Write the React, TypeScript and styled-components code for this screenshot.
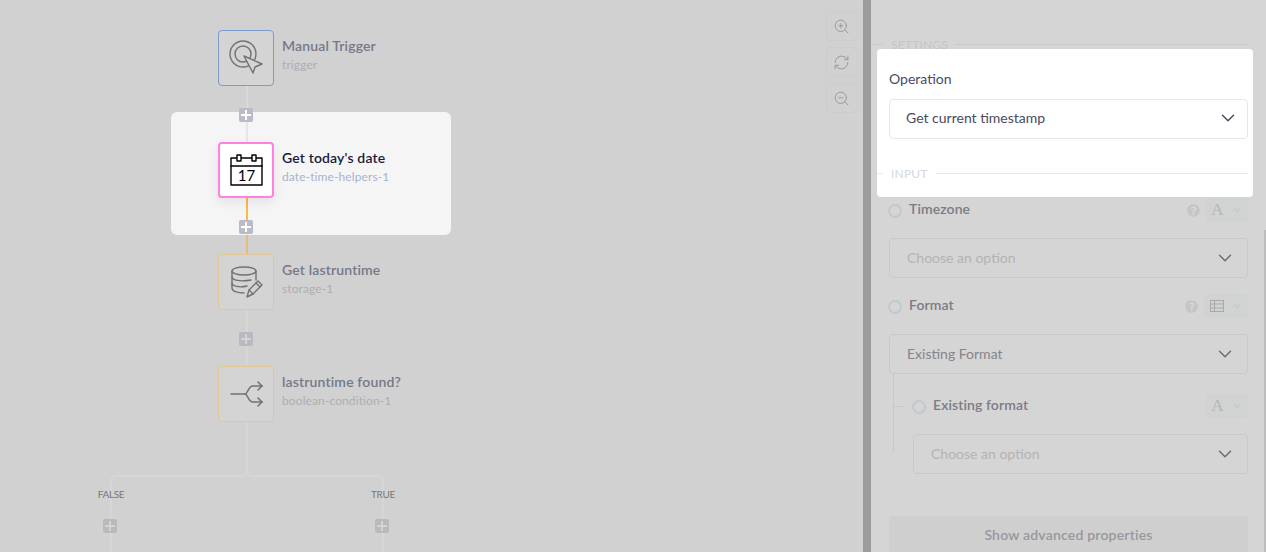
import styled, { createGlobalStyle } from "styled-components"
import { ChevronDown, RefreshCw, ZoomIn, ZoomOut } from "lucide-react"
import { FaQuestionCircle } from "react-icons/fa"

const font = `Lato, "Open Sans", sans-serif`;

const Global = createGlobalStyle`
    html, body { margin: 0; padding: 0; height: 100%; overflow: hidden; }
    body { font-family: ${font}; background: #d2d2d2; }
    #root { height: 100%; }
`;

const Page = styled.div`
    display: flex;
    height: 552px;
    overflow: hidden;
`;

const Canvas = styled.div`
    position: relative;
    width: 863px;
    flex-shrink: 0;
    background: #d1d1d1;
    overflow: hidden;
`;

const Spot = styled.div`
    position: absolute;
    left: 171px;
    top: 112px;
    width: 280px;
    height: 123px;
    background: #f5f5f5;
    border-radius: 6px;
`;

const Edges = styled.svg`
    position: absolute;
    left: 0;
    top: 0;
`;

const Node = styled.div<{ $x: number; $y: number; $accent: string; $active?: boolean }>`
    position: absolute;
    left: ${p => p.$x}px;
    top: ${p => p.$y}px;
    width: 56px;
    height: 56px;
    box-sizing: border-box;
    display: flex;
    align-items: center;
    justify-content: center;
    border-radius: 4px;
    border: ${p => (p.$active ? 2 : 1)}px solid ${p => p.$accent};
    background: ${p => (p.$active ? "#fff" : "#d4d4d4")};
    box-shadow: ${p => (p.$active ? "0 4px 12px rgba(0,0,0,.08)" : "none")};
`;

const NodeText = styled.div<{ $y: number }>`
    position: absolute;
    left: 282px;
    top: ${p => p.$y}px;
    white-space: nowrap;
`;

const NodeTitle = styled.div<{ $active?: boolean }>`
    font-size: 14px;
    line-height: 18px;
    font-weight: 600;
    letter-spacing: .15px;
    color: ${p => (p.$active ? "#1a1a3e" : "#767889")};
`;

const NodeSub = styled.div<{ $active?: boolean }>`
    margin-top: 1px;
    font-size: 12px;
    line-height: 18px;
    letter-spacing: .1px;
    color: ${p => (p.$active ? "#a9b2cc" : "#aeaeb2")};
`;

const Plus = styled.div<{ $x: number; $y: number; $dim?: boolean }>`
    position: absolute;
    left: ${p => p.$x}px;
    top: ${p => p.$y}px;
    width: 14px;
    height: 14px;
    border-radius: 2px;
    background: ${p => (p.$dim ? "#b9b9c0" : "#babac8")};

    &::before, &::after {
        content: "";
        position: absolute;
        background: ${p => (p.$dim ? "#d4d4d4" : "#fff")};
    }
    &::before { left: 2px; right: 2px; top: 6px; height: 2px; }
    &::after { top: 2px; bottom: 2px; left: 6px; width: 2px; }
`;

const BranchLabel = styled.div<{ $x: number }>`
    position: absolute;
    left: ${p => p.$x}px;
    top: 488px;
    width: 60px;
    margin-left: -30px;
    text-align: center;
    font-size: 10px;
    line-height: 12px;
    letter-spacing: -.3px;
    color: #77777c;
`;

const ZoomBar = styled.div`
    position: absolute;
    left: 826px;
    top: 11px;
    display: flex;
    flex-direction: column;
    gap: 6px;
`;

const ZoomButton = styled.div`
    width: 31px;
    height: 30px;
    box-sizing: border-box;
    display: flex;
    align-items: center;
    justify-content: center;
    border: 1px solid #cdcdcd;
    border-radius: 4px;
    color: #9a9a9a;
`;

const Divider = styled.div`
    width: 8px;
    flex-shrink: 0;
    background: #9c9c9c;
`;

const Panel = styled.div`
    position: relative;
    flex: 1;
    box-sizing: border-box;
    padding: 36px 18px 0;
    background: #d5d5d5;
    overflow: hidden;
`;

const Scroll = styled.div`
    position: absolute;
    right: 0;
    top: 230px;
    bottom: 0;
    width: 2px;
    background: #bdbdbd;
`;

const Heading = styled.div<{ $lit?: boolean }>`
    display: flex;
    align-items: center;
    height: 16px;
    margin-left: ${p => (p.$lit ? "-12px" : "-16px")};
    margin-top: ${p => (p.$lit ? "26px" : "0")};
    font-size: 12px;
    letter-spacing: .2px;
    color: ${p => (p.$lit ? "#d3d7e3" : "#c6c6c6")};

    &::before, &::after {
        content: "";
        height: 1px;
        background: ${p => (p.$lit ? "#e8e8ee" : "#c9c9c9")};
    }
    &::before { width: ${p => (p.$lit ? "6px" : "10px")}; margin-right: 8px; }
    &::after { flex: 1; margin-left: 8px; }
`;

const Lit = styled.div`
    position: relative;
    z-index: 1;
    margin: -3px -5px 0 -12px;
    padding: 20px 5px 16px 12px;
    background: #fff;
    border-radius: 4px;
`;

const LitLabel = styled.div`
    height: 20px;
    line-height: 20px;
    font-size: 14px;
    color: #4a4a68;
    margin-bottom: 10px;
`;

const Select = styled.div<{ $lit?: boolean; $tone?: "value" | "muted" }>`
    height: 40px;
    box-sizing: border-box;
    display: flex;
    align-items: center;
    justify-content: space-between;
    padding: 0 ${p => (p.$lit ? "8px" : "11px")} 0 ${p => (p.$lit ? "16px" : "17px")};
    border: 1px solid ${p => (p.$lit ? "#e6e6ec" : "#c9c9c9")};
    border-radius: 4px;
    font-size: 14px;
    color: ${p => (p.$lit ? "#4a4a5e" : p.$tone === "value" ? "#85858a" : "#b3b3b3")};

    & span { margin-bottom: ${p => (p.$lit ? "4px" : "2px")}; }
    & svg { color: ${p => (p.$lit ? "#4a4a5e" : "#6c6c6c")}; margin-bottom: ${p => (p.$lit ? "2px" : "1px")}; }
`;

const FieldRow = styled.div<{ $top: number }>`
    display: flex;
    align-items: center;
    height: 24px;
    margin-top: ${p => p.$top}px;
    margin-bottom: 16px;
`;

const Radio = styled.div`
    width: 14px;
    height: 14px;
    box-sizing: border-box;
    margin: 2px 7px 0 -1px;
    border: 2px solid #c3c8cc;
    border-radius: 50%;
`;

const FieldLabel = styled.div`
    flex: 1;
    margin-bottom: 3px;
    font-size: 14px;
    font-weight: 600;
    letter-spacing: .1px;
    color: #7b7b84;
`;

const Help = styled.div`
    display: flex;
    margin-right: 6px;
    color: #c5c5c5;
`;

const TypeTab = styled.div<{ $wide?: boolean }>`
    width: ${p => (p.$wide ? "44px" : "42px")};
    height: 24px;
    display: flex;
    align-items: center;
    justify-content: center;
    gap: 7px;
    background: #d1d3d3;
    color: #a9a9a9;
    border-radius: 2px;
`;

const TypeLetter = styled.span`
    margin-bottom: 2px;
    font-family: "Liberation Serif", serif;
    font-size: 17px;
    line-height: 1;
    color: #b5b5b5;
`;

const Nested = styled.div`
    position: relative;
    box-sizing: border-box;
    padding: 20px 0 0 24px;
    height: 100px;

    &::before {
        content: "";
        position: absolute;
        left: 4px;
        top: 0;
        height: 78px;
        width: 1px;
        background: #c9c9c9;
    }
    &::after {
        content: "";
        position: absolute;
        left: 4px;
        top: 32px;
        width: 11px;
        height: 1px;
        background: #c9c9c9;
    }
`;

const AdvancedButton = styled.div`
    margin-top: 42px;
    height: 40px;
    padding-bottom: 4px;
    box-sizing: border-box;
    display: flex;
    align-items: center;
    justify-content: center;
    background: #cfcfcf;
    border-radius: 4px;
    font-size: 14px;
    font-weight: 600;
    letter-spacing: .2px;
    color: #97979e;
`;

const Ink = styled.svg<{ $stroke?: string; $weight?: number }>`
    width: 32px;
    height: 32px;
    overflow: visible;
    fill: none;
    stroke: ${p => p.$stroke ?? "#727272"};
    stroke-width: ${p => p.$weight ?? 1.4};
    stroke-linecap: round;
    stroke-linejoin: round;
`;

const TriggerIcon = () => (
    <Ink viewBox="0 0 32 32">
        <circle cx="13" cy="12" r="13" />
        <circle cx="13" cy="12" r="8" />
        <path d="M14 14 L32 22 L25 25 L23 31 Z" fill="#d4d4d4" />
    </Ink>
);

const CalendarIcon = () => (
    <Ink viewBox="0 0 32 32" $stroke="#000">
        <rect x="1" y="4" width="31" height="27" fill="#fff" />
        <path d="M1 12 H32" />
        <rect x="7" y="1" width="4" height="6" fill="#fff" />
        <rect x="22" y="1" width="4" height="6" fill="#fff" />
        <text x="16.5" y="27" textAnchor="middle" fontSize="15" fill="#000" stroke="none" fontFamily={font}>17</text>
    </Ink>
);

const StorageIcon = () => (
    <Ink viewBox="0 0 32 32">
        <ellipse cx="14" cy="5" rx="12" ry="4" />
        <path d="M2 5 V22 C2 25 7 27 14 27" />
        <path d="M26 5 V14" />
        <path d="M2 11 C2 14 10 16 21 14" />
        <path d="M2 17 C2 20 9 22 17 20" />
        <path d="M17 31 L19 24 L28 15 L32 19 L23 28 Z" />
        <path d="M26 17 L30 21 M19 24 L23 28" />
    </Ink>
);

const BranchIcon = () => (
    <Ink viewBox="0 0 32 32" $weight={1.6}>
        <path d="M1 16 H15 C18 16 18 8 23 8 H32" />
        <path d="M15 16 C18 16 18 24 23 24 H32" />
        <path d="M28 4 L32 8 L28 12 M28 20 L32 24 L28 28" />
    </Ink>
);

const TableIcon = () => (
    <svg width="14" height="12" viewBox="0 0 14 12" fill="none" stroke="#a9a9a9" strokeWidth="1">
        <rect x=".5" y=".5" width="13" height="11" />
        <path d="M0 4 H14 M0 8 H14 M4.5 0 V12" />
    </svg>
);

const nodes = [
    { y: 30, title: "Manual Trigger", sub: "trigger", accent: "#7b9bcd", icon: <TriggerIcon /> },
    { y: 142, title: "Get today's date", sub: "date-time-helpers-1", accent: "#ff80e0", icon: <CalendarIcon />, active: true },
    { y: 254, title: "Get lastruntime", sub: "storage-1", accent: "#e1c592", icon: <StorageIcon /> },
    { y: 366, title: "lastruntime found?", sub: "boolean-condition-1", accent: "#e1c592", icon: <BranchIcon /> },
];

const pluses = [
    { x: 239, y: 108 },
    { x: 239, y: 220 },
    { x: 239, y: 332, dim: true },
    { x: 103, y: 519, dim: true },
    { x: 375, y: 519, dim: true },
];

const Chevron = () => <ChevronDown size={22} strokeWidth={1.6} />;

const TabChevron = () => <ChevronDown size={12} strokeWidth={1.6} color="#bcbcbc" />;

const App = () => {
    return (
        <Page>
            <Global />
            <Canvas>
                <Spot />
                <Edges width="863" height="552" fill="none" strokeWidth="2">
                    <path d="M247 86 V108" stroke="#d9d9dc" />
                    <path d="M247 122 V142" stroke="#e5e5ea" />
                    <path d="M247 198 V220" stroke="#ffb74a" />
                    <path d="M247 235 V254" stroke="#e2bd7e" />
                    <path d="M247 310 V366" stroke="#d6d6d6" />
                    <path d="M247 422 V470 Q247 476 241 476 H117 Q111 476 111 482 V552" stroke="#d6d6d6" />
                    <path d="M247 470 Q247 476 253 476 H377 Q383 476 383 482 V552" stroke="#d6d6d6" />
                </Edges>
                {nodes.map(n => (
                    <div key={n.title}>
                        <Node $x={218} $y={n.y} $accent={n.accent} $active={n.active}>{n.icon}</Node>
                        <NodeText $y={n.y + 7}>
                            <NodeTitle $active={n.active}>{n.title}</NodeTitle>
                            <NodeSub $active={n.active}>{n.sub}</NodeSub>
                        </NodeText>
                    </div>
                ))}
                {pluses.map(p => <Plus key={`${p.x}-${p.y}`} $x={p.x} $y={p.y} $dim={p.dim} />)}
                <BranchLabel $x={111}>FALSE</BranchLabel>
                <BranchLabel $x={383}>TRUE</BranchLabel>
                <ZoomBar>
                    <ZoomButton><ZoomIn size={17} strokeWidth={1.4} /></ZoomButton>
                    <ZoomButton><RefreshCw size={17} strokeWidth={1.4} /></ZoomButton>
                    <ZoomButton><ZoomOut size={17} strokeWidth={1.4} /></ZoomButton>
                </ZoomBar>
            </Canvas>
            <Divider />
            <Panel>
                <Heading>SETTINGS</Heading>
                <Lit>
                    <LitLabel>Operation</LitLabel>
                    <Select $lit><span>Get current timestamp</span><Chevron /></Select>
                    <Heading $lit>INPUT</Heading>
                </Lit>
                <FieldRow $top={1}>
                    <Radio />
                    <FieldLabel>Timezone</FieldLabel>
                    <Help><FaQuestionCircle size={13} /></Help>
                    <TypeTab><TypeLetter>A</TypeLetter><TabChevron /></TypeTab>
                </FieldRow>
                <Select><span>Choose an option</span><Chevron /></Select>
                <FieldRow $top={16}>
                    <Radio />
                    <FieldLabel>Format</FieldLabel>
                    <Help><FaQuestionCircle size={13} /></Help>
                    <TypeTab $wide><TableIcon /><TabChevron /></TypeTab>
                </FieldRow>
                <Select $tone="value"><span>Existing Format</span><Chevron /></Select>
                <Nested>
                    <FieldRow $top={0}>
                        <Radio />
                        <FieldLabel>Existing format</FieldLabel>
                        <TypeTab><TypeLetter>A</TypeLetter><TabChevron /></TypeTab>
                    </FieldRow>
                    <Select><span>Choose an option</span><Chevron /></Select>
                </Nested>
                <AdvancedButton>Show advanced properties</AdvancedButton>
                <Scroll />
            </Panel>
        </Page>
    )
}

export default App;
